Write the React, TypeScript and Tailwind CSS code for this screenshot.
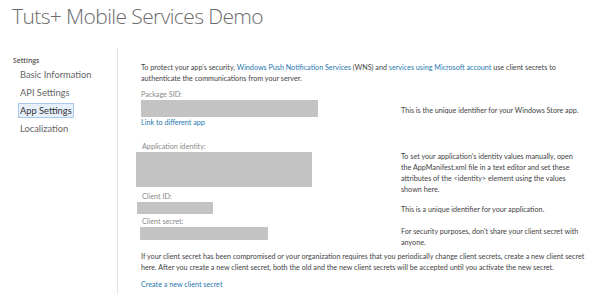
import React from "react";

const navItems = ["Basic Information", "API Settings", "App Settings", "Localization"];

function Field({ label, rowClass, boxClass, labelClass, children, note, noteClass }: {
  label: string;
  rowClass: string;
  boxClass: string;
  labelClass?: string;
  children?: React.ReactNode;
  note: React.ReactNode;
  noteClass: string;
}) {
  return (
    <div className={"flex " + rowClass}>
      <div className="w-[260px]">
        <div className={"text-[#8a8a8a] leading-[10px] " + (labelClass ?? "")}>{label}</div>
        <div className={"bg-[#c3c3c3] " + boxClass}></div>
        {children}
      </div>
      <div className={"w-[180px] text-[#444] leading-[11px] " + noteClass}>{note}</div>
    </div>
  );
}

export default function App() {
  return (
    <div className="w-[600px] h-[294px] bg-white overflow-hidden font-['Lato',sans-serif]">
      {/* Title */}
      <h1 className="pl-[12px] pt-[2px] h-[48px] font-['Open_Sans',sans-serif] text-[21px] leading-[28px] font-light text-[#6b6b6b] tracking-[-0.6px]">
        Tuts+ Mobile Services Demo
      </h1>

      <div className="flex h-[246px]">
        {/* Sidebar */}
        <aside className="w-[117px] pt-[8px]">
          <div className="pl-[13px] font-['Open_Sans',sans-serif] text-[6.8px] font-semibold text-[#555] leading-[10px]">Settings</div>
          <ul className="mt-[1px] flex flex-col gap-[3px]">
            {navItems.map((item) => (
              <li key={item} className="flex pl-[18px]">
                <span
                  className={
                    "block px-[1px] text-[9.3px] leading-[13px] border " +
                    (item === "App Settings"
                      ? "border-[#a8c8ec] bg-[#e6f0fb] text-[#333]"
                      : "border-transparent text-[#666]")
                  }
                >
                  {item}
                </span>
              </li>
            ))}
          </ul>
        </aside>

        {/* Main */}
        <main className="flex-1 border-l border-[#e2e2e2] pl-[23px] pt-[14px] text-[7.2px]">
          <p className="text-[#444] leading-[11px] w-[422px]">
            <span>To protect your app's security, </span>
            <span className="text-[#2878b0]">Windows Push Notification Services</span>
            <span> (WNS) and </span>
            <span className="text-[#2878b0]">services using Microsoft account</span>
            <span> use client secrets to</span>
            <br />
            <span>authenticate the communications from your server.</span>
          </p>

          <div className="mt-[6px]">
            <Field
              label="Package SID:"
              rowClass="h-[38px]"
              boxClass="w-[177px] h-[17px]"
              note="This is the unique identifier for your Windows Store app."
              noteClass="pt-[15px]"
            >
              <div className="mt-[1px] text-[#2878b0] leading-[10px]">Link to different app</div>
            </Field>
          </div>

          <div className="mt-[14px]">
            <Field
              label="Application identity:"
              rowClass="h-[45px]"
              labelClass="pl-[1px]"
              boxClass="w-[176px] h-[35px] ml-[-5px]"
              note="To set your application's identity values manually, open the AppManifest.xml file in a text editor and set these attributes of the <identity> element using the values shown here."
              noteClass="pt-[9px]"
            />
          </div>

          <div className="mt-[5px]">
            <Field
              label="Client ID:"
              rowClass="h-[22px]"
              labelClass="pl-[1px]"
              boxClass="w-[76px] h-[12px] ml-[-4px]"
              note="This is a unique identifier for your application."
              noteClass="pt-[12px]"
            />
          </div>

          <div className="mt-[3px]">
            <Field
              label="Client secret:"
              rowClass="h-[23px]"
              labelClass="pl-[1px]"
              boxClass="w-[128px] h-[13px] ml-[-1px]"
              note="For security purposes, don't share your client secret with anyone."
              noteClass="pt-[9px]"
            />
          </div>

          <p className="mt-[11px] text-[#444] leading-[11px] w-[445px]">
            If your client secret has been compromised or your organization requires that you periodically change client secrets, create a new client secret
            here. After you create a new client secret, both the old and the new client secrets will be accepted until you activate the new secret.
          </p>
          <div className="mt-[7px] text-[#2878b0] leading-[10px]">Create a new client secret</div>
        </main>
      </div>
    </div>
  );
}
